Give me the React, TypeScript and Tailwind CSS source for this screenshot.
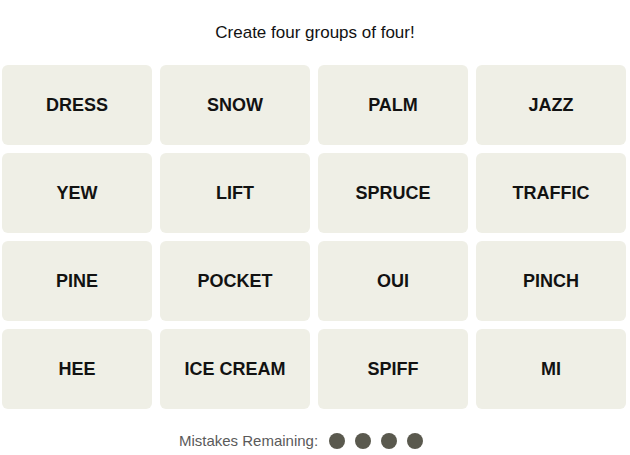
const words = [
  "DRESS", "SNOW", "PALM", "JAZZ",
  "YEW", "LIFT", "SPRUCE", "TRAFFIC",
  "PINE", "POCKET", "OUI", "PINCH",
  "HEE", "ICE CREAM", "SPIFF", "MI",
];

export default function App() {
  return (
    <div className="w-[630px] h-[455px] bg-white font-['Liberation_Sans',Arial,sans-serif] text-[#121212]">
      <p className="pt-[23px] text-center text-[17px] leading-[20px]">Create four groups of four!</p>
      <div className="ml-[2px] mt-[22px] grid w-[624px] grid-cols-4 gap-[8px]">
        {words.map((w) => (
          <button
            key={w}
            className="flex h-[80px] items-center justify-center rounded-[6px] bg-[#efefe6] text-[18px] font-bold"
          >
            {w}
          </button>
        ))}
      </div>
      <div className="mt-[21px] flex items-center justify-center gap-[11px] pr-[28px]">
        <span className="text-[15px] text-[#5a5a5a]">Mistakes Remaining:</span>
        <div className="flex gap-[10px]">
          <span className="h-[16px] w-[16px] rounded-full bg-[#5a594e]" />
          <span className="h-[16px] w-[16px] rounded-full bg-[#5a594e]" />
          <span className="h-[16px] w-[16px] rounded-full bg-[#5a594e]" />
          <span className="h-[16px] w-[16px] rounded-full bg-[#5a594e]" />
        </div>
      </div>
    </div>
  );
}
